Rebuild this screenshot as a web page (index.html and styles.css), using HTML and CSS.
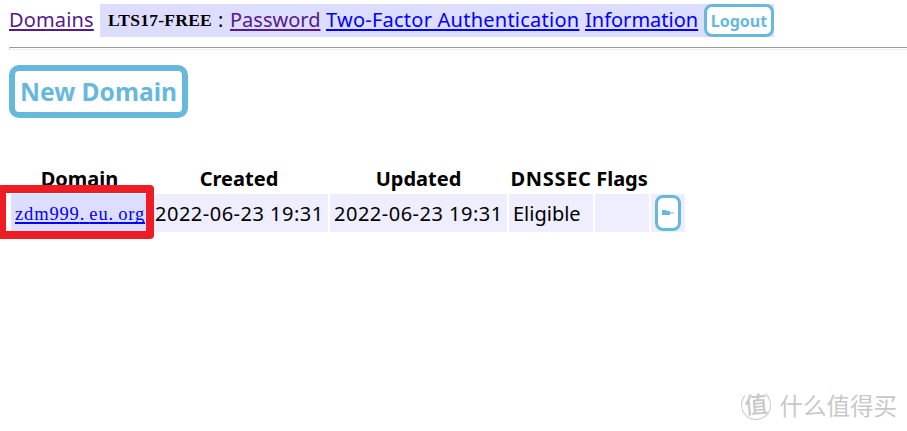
FILE: index.html
```html
<!DOCTYPE html>
<html lang="en">
<head>
<meta charset="utf-8">
<title>Domains</title>
<link rel="stylesheet" href="styles.css">
</head>
<body>
<nav class="topbar">
  <a class="visited domains" href="#">Domains</a>
  <div class="account">
    <b class="handle">LTS17-FREE</b>
    <span class="colon">:</span>
    <a class="visited password" href="#">Password</a>
    <a class="twofactor" href="#">Two-Factor Authentication</a>
    <a class="information" href="#">Information</a>
    <button class="btn logout">Logout</button>
  </div>
</nav>
<hr class="rule">
<button class="btn new-domain">New Domain</button>
<table class="list">
  <colgroup><col class="c1"><col class="c2"><col class="c3"><col class="c4"><col class="c5"><col class="c6"></colgroup>
  <thead>
    <tr><th>Domain</th><th>Created</th><th>Updated</th><th><span class="dnssec">DNSSEC</span></th><th>Flags</th><th></th></tr>
  </thead>
  <tbody>
    <tr>
      <td class="name"><a class="zone" href="#">zdm999<span class="dot">.</span>eu<span class="dot">.</span>org</a><div class="highlight"></div></td>
      <td><span class="date created">2022-06-23 19:31</span></td>
      <td><span class="date">2022-06-23 19:31</span></td>
      <td>Eligible</td>
      <td></td>
      <td><button class="btn action" aria-label="Actions"><svg width="14" height="8" viewBox="0 0 14 8"><path d="M1 1h4l1 1h3v1.500h4v1H9V6H1z" fill="#66b9dc"/></svg></button></td>
    </tr>
  </tbody>
</table>
<div class="watermark">
  <div class="seal">值</div>
  <span class="brand">什么值得买</span>
</div>
</body>
</html>
```
FILE: styles.css
```css
* { box-sizing: border-box; }
body {
  margin: 0;
  padding: 4px 0 0 9px;
  height: 431px;
  overflow: hidden;
  background: #fff;
  color: #000;
  font: 20px/33px "Noto Sans", "Noto Sans CJK SC", sans-serif;
  white-space: nowrap;
}
a { color: #00f; text-decoration: underline; text-decoration-thickness: 2px; text-underline-offset: 2px; text-decoration-skip-ink: none; }
a.visited { color: #551a8b; }
.topbar { display: flex; gap: 6px; height: 33px; }
.topbar a { line-height: 32px; }
.domains { width: 85px; letter-spacing: 0.15px; }
.account { display: flex; width: 674px; padding-left: 8px; background: #ddf; }
.handle { width: 109px; font: bold 17.5px/33px "Liberation Serif", serif; letter-spacing: 0.25px; }
.colon { width: 13px; padding-left: 1px; line-height: 32px; }
.password { width: 90px; margin-right: 6px; }
.twofactor { width: 253px; margin-right: 6px; letter-spacing: 0.24px; }
.information { width: 113px; margin-right: 6px; }
.btn { display: block; margin: 0; padding: 0; background: #fff; color: #66b9dc; border: 3px solid #66b9dc; font-family: "Noto Sans", sans-serif; font-weight: bold; text-align: center; }
.logout { width: 70px; height: 33px; border-radius: 8px; font-size: 16px; line-height: 28px; }
.rule { height: 3px; margin: 10px 0 15px; border: 0; border-top: 1px solid #999; border-bottom: 1px solid #eee; border-left: 1px solid #ccc; }
.new-domain { width: 179px; height: 53px; border-width: 6px; border-radius: 10px; font-size: 24.6px; line-height: 41px; }
.list { width: 678px; margin-top: 45px; border-spacing: 2px 0; table-layout: fixed; }
.c1 { width: 137px; } .c2 { width: 178px; } .c3 { width: 177px; } .c4 { width: 84px; } .c5 { width: 54px; } .c6 { width: 34px; }
th, td { padding: 0; height: 38px; }
th { height: 31px; line-height: 31px; }
.dnssec { margin: 0 -2px; letter-spacing: 0.7px; }
td { padding-left: 4px; background: #eef; line-height: 37px; vertical-align: middle; }
td.name { position: relative; background: #ddf; }
.zone { display: block; padding-top: 2px; font: 18.5px/36px "Liberation Serif", serif; letter-spacing: 0.85px; }
.dot { letter-spacing: 5px; }
.date { letter-spacing: 0.5px; }
.created { margin-left: 1px; }
.highlight { position: absolute; left: -13px; top: -9px; width: 156px; height: 54px; border: 8px solid #ee1c24; border-radius: 4px; }
.action { width: 26px; height: 36px; border-radius: 8px; }
.action svg { display: block; margin: auto; }
.watermark { position: absolute; right: 10px; bottom: 10px; display: flex; gap: 9px; align-items: center; height: 32px; color: #c8c8c8; font-family: "Noto Sans CJK SC", sans-serif; }
.seal { width: 30px; height: 30px; border: 1.5px solid #c8c8c8; border-top-color: transparent; border-radius: 50%; font-size: 23px; font-weight: 500; line-height: 25px; text-align: center; transform: rotate(-5deg); }
.brand { font-size: 23.5px; line-height: 32px; }
```
